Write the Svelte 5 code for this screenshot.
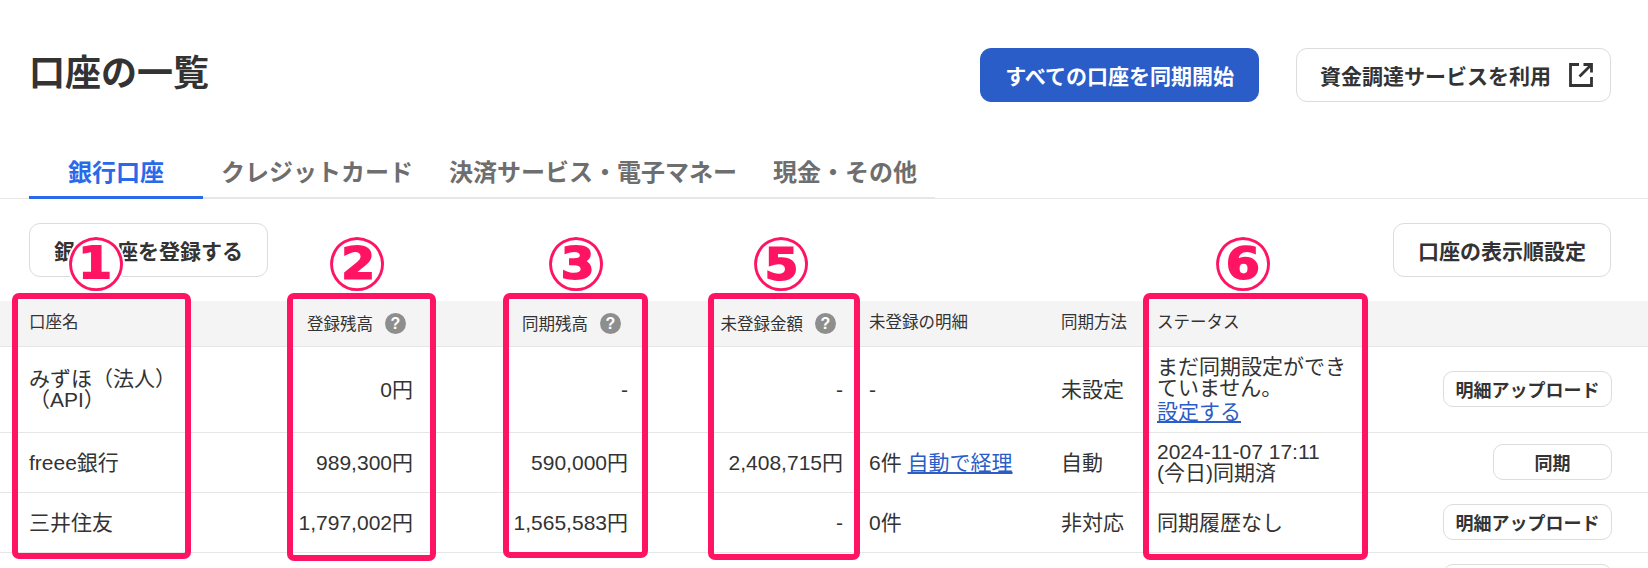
<script>
  const tabs = ['銀行口座', 'クレジットカード', '決済サービス・電子マネー', '現金・その他']

  const rows = [
    { name: 'みずほ（法人）（API）', reg: '0円', sync: '-', diff: '-', detail: '-', method: '未設定', status: ['まだ同期設定ができていません。'], link: '設定する', action: '明細アップロード', h: 'tall' },
    { name: 'freee銀行', reg: '989,300円', sync: '590,000円', diff: '2,408,715円', detail: '6件', auto: '自動で経理', method: '自動', status: ['2024-11-07 17:11', '(今日)同期済'], action: '同期' },
    { name: '三井住友', reg: '1,797,002円', sync: '1,565,583円', diff: '-', detail: '0件', method: '非対応', status: ['同期履歴なし'], action: '明細アップロード' },
    { name: '', reg: '', sync: '', diff: '', detail: '', method: '', status: [], action: '明細アップロード' }
  ]

  // annotation frames drawn over the screenshot
  const marks = [
    { n: '①', x: 12, w: 179, h: 266, cx: 96 },
    { n: '②', x: 287, w: 149, h: 268, cx: 357 },
    { n: '③', x: 503, w: 145, h: 265, cx: 576 },
    { n: '⑤', x: 708, w: 152, h: 267, cx: 781 },
    { n: '⑥', x: 1143, w: 225, h: 267, cx: 1243 }
  ]
</script>

<div class="page">
  <header class="top">
    <h1>口座の一覧</h1>
    <div class="top-actions">
      <button class="btn primary">すべての口座を同期開始</button>
      <button class="btn ext-btn">
        資金調達サービスを利用
        <svg class="ext" viewBox="0 0 24 24" width="24" height="24" aria-hidden="true">
          <path d="M10 1.500H1.500v21h21V14M22 2 10.500 13.500M14.500 1.500h8v8" fill="none" stroke="#333" stroke-width="2.800" />
        </svg>
      </button>
    </div>
  </header>

  <div class="tabline">
    <nav class="tabs">
      {#each tabs as t, i}
        <span class="tab" class:active={i === 0}>{t}</span>
      {/each}
    </nav>
  </div>

  <div class="actions">
    <button class="btn">銀行口座を登録する</button>
    <button class="btn">口座の表示順設定</button>
  </div>

  <table>
    <colgroup>
      <col class="c-name" /><col class="c-num" /><col class="c-num2" /><col class="c-num2" />
      <col class="c-detail" /><col class="c-method" /><col class="c-status" /><col />
    </colgroup>
    <thead>
      <tr>
        <th class="first">口座名</th>
        <th class="num">登録残高<span class="help">?</span></th>
        <th class="num">同期残高<span class="help">?</span></th>
        <th class="num">未登録金額<span class="help">?</span></th>
        <th class="detail">未登録の明細</th>
        <th>同期方法</th>
        <th>ステータス</th>
        <th></th>
      </tr>
    </thead>
    <tbody>
      {#each rows as r}
        <tr class:tall={r.h === 'tall'}>
          <td class="first name">{r.name}</td>
          <td class="val">{r.reg}</td>
          <td class="val">{r.sync}</td>
          <td class="val">{r.diff}</td>
          <td class="detail">{r.detail}{#if r.auto}&nbsp;<a href="#auto">{r.auto}</a>{/if}</td>
          <td>{r.method}</td>
          <td class="status">
            {#each r.status as s}<div>{s}</div>{/each}
            {#if r.link}<a class="setup" href="#setup">{r.link}</a>{/if}
          </td>
          <td class="act"><button class="small" class:wide={r.action !== '同期'}>{r.action}</button></td>
        </tr>
      {/each}
    </tbody>
  </table>

  {#each marks as m}
    <div class="frame" style="left:{m.x}px;width:{m.w}px;height:{m.h}px"></div>
    <div class="circled" style="left:{m.cx - 40}px">{m.n}</div>
  {/each}
</div>

<style>
  :global(html), :global(body) { margin: 0; overflow: hidden; background: #fff; }
  .page {
    position: relative; width: 1648px; height: 568px; overflow: hidden;
    font-family: "Liberation Sans", "Noto Sans CJK JP", sans-serif; color: #333;
  }
  .top {
    display: flex; justify-content: space-between; align-items: center;
    height: 54px; padding: 48px 37px 0 29px;
  }
  h1 { margin: 0 0 2px; font-size: 36px; font-weight: 700; line-height: 44px; }
  .top-actions { display: flex; gap: 37px; }
  .btn {
    height: 54px; padding: 0 24px; display: inline-flex; align-items: center;
    font: 700 21px "Liberation Sans", "Noto Sans CJK JP", sans-serif; color: #333;
    background: #fff; border: 1px solid #dcdcdc; border-radius: 11px; box-sizing: border-box;
  }
  .btn.primary { background: #2b5dc8; border-color: #2b5dc8; color: #fff; }
  .btn.ext-btn { padding: 0 17px 0 23px; }
  .ext { margin-left: 18px; }

  .tabline { margin-top: 46px; border-bottom: 1px solid #e6e6e6; height: 51px; box-sizing: border-box; padding-left: 29px; }
  .tabs { display: inline-flex; height: 51px; border-bottom: 2px solid #e6e6e6; box-sizing: border-box; }
  .tab {
    padding: 6px 18px 0; font-size: 24px; font-weight: 700; color: #6e6e6e;
    line-height: 38px; height: 49px; box-sizing: border-box;
  }
  .tab.active { padding: 6px 39px 0; color: #2a6ae8; border-bottom: 3px solid #2a6ae8; height: 51px; }

  .actions { display: flex; justify-content: space-between; padding: 24px 37px 0 29px; }

  table { width: 1648px; margin-top: 24px; border-collapse: collapse; table-layout: fixed; }
  .c-name { width: 220px; }
  .c-num { width: 202px; }
  .c-num2 { width: 215px; }
  .c-detail { width: 197px; }
  .c-method { width: 96px; }
  .c-status { width: 213px; }
  th {
    height: 45px; padding: 0 0 5px 12px; background: #f5f4f5; text-align: left;
    font-size: 16.500px; font-weight: 400; color: #333; border-bottom: 1px solid #e6e6e6; box-sizing: border-box;
  }
  th.num { text-align: right; padding: 0 16px 1px 0; }
  th.first { padding-left: 29px; }
  th.detail { padding-left: 17px; }
  .help {
    display: inline-block; width: 21px; height: 21px; margin-left: 12px; border-radius: 50%;
    background: #8e8e8e; color: #fff; font-size: 16px; font-weight: 700; line-height: 21px; text-align: center;
    vertical-align: 1px;
  }
  td {
    height: 60px; padding: 0 0 0 12px; font-size: 21px; line-height: 21px; vertical-align: middle;
    border-bottom: 1px solid #e6e6e6; box-sizing: border-box; color: #333;
  }
  tr.tall td { height: 86px; }
  td.first { padding-left: 29px; padding-right: 40px; }
  td.detail { padding-left: 17px; }
  td.val { text-align: right; padding: 0 9px 0 0; }
  a { color: #2b5dc8; text-decoration: underline; }
  .setup { display: inline-block; margin-top: 3px; }
  td.act { text-align: right; padding: 0 36px 0 0; }
  .small {
    width: 119px; height: 36px; padding: 0; background: #fff; border: 1px solid #dcdcdc; border-radius: 10px;
    font: 700 18px "Liberation Sans", "Noto Sans CJK JP", sans-serif; color: #333;
  }
  .small.wide { width: 169px; }

  .frame {
    position: absolute; top: 293px; box-sizing: border-box;
    border: 6px solid #ff1464; border-radius: 7px;
  }
  .circled {
    position: absolute; top: 224px; width: 80px; text-align: center;
    font: 700 74px/80px "DejaVu Sans", "Noto Sans CJK JP", sans-serif; color: #ff1464;
    background: radial-gradient(circle at center, #fff 26px, transparent 27px);
    -webkit-text-stroke: 4px #fff; paint-order: stroke fill;
  }
</style>
